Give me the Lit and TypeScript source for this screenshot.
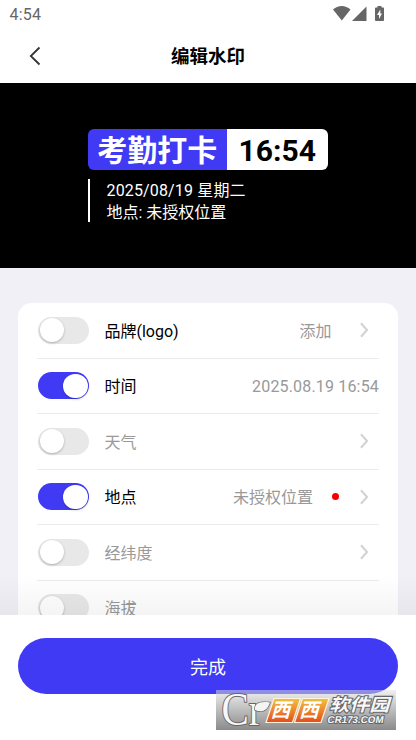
import { LitElement, html, css, nothing } from "lit";
import { customElement, property } from "lit/decorators.js";

interface Item {
  label: string;
  on?: boolean;
  dark?: boolean;
  value?: string;
  dot?: boolean;
  arrow?: boolean;
}

const ITEMS: Item[] = [
  { label: "品牌(logo)", dark: true, value: "添加", arrow: true },
  { label: "时间", on: true, dark: true, value: "2025.08.19 16:54" },
  { label: "天气", arrow: true },
  { label: "地点", on: true, dark: true, value: "未授权位置", dot: true, arrow: true },
  { label: "经纬度", arrow: true },
  { label: "海拔" },
];

@customElement("toggle-switch")
class ToggleSwitch extends LitElement {
  @property({ type: Boolean, reflect: true }) on = false;

  static styles = css`
    :host { display: flex; flex: none; box-sizing: border-box; width: 51px; height: 27.4px; padding: 0 1.5px; border-radius: 14px; background: #e8e8e8; align-items: center; }
    :host([on]) { background: #403af5; justify-content: flex-end; }
    .knob { width: 24.4px; height: 24.4px; border-radius: 50%; background: #fff; box-shadow: 0 1px 2.5px rgba(0, 0, 0, 0.25); }
  `;

  render() {
    return html`<div class="knob"></div>`;
  }
}

@customElement("setting-row")
class SettingRow extends LitElement {
  @property({ attribute: false }) item!: Item;

  static styles = css`
    :host { display: flex; align-items: center; box-sizing: border-box; height: 55.5px; border-bottom: 1px solid #ebebed; padding-left: 1px; font-size: 16px; color: #999; }
    .label { margin-left: 15.5px; flex: 1; line-height: 24px; padding-top: 2.5px; }
    .dark { color: #000; }
    .value { line-height: 24px; padding-top: 2.5px; }
    .time { letter-spacing: 0.17px; }
    .dot { width: 7px; height: 7px; border-radius: 50%; background: #f60000; margin-left: 18.5px; }
    .arrow { width: 9px; height: 16px; margin: 0 10px 0 28.5px; }
    .dot + .arrow { margin-left: 21.5px; }
  `;

  render() {
    const i = this.item;
    return html`
      <toggle-switch ?on=${i.on}></toggle-switch>
      <span class="label ${i.dark ? "dark" : ""}">${i.label}</span>
      ${i.value ? html`<span class="value ${i.arrow ? "" : "time"}">${i.value}</span>` : nothing}
      ${i.dot ? html`<span class="dot"></span>` : nothing}
      ${i.arrow
        ? html`<svg class="arrow" viewBox="0 0 9 16"><path d="M1 1.300 7 8 1 14.700" fill="none" stroke="#d3d3d3" stroke-width="2.1" /></svg>`
        : nothing}
    `;
  }
}

@customElement("site-badge")
class SiteBadge extends LitElement {
  static styles = css`
    :host { display: block; width: 180px; height: 40px; background: linear-gradient(rgba(224, 224, 224, 0.5), rgba(134, 134, 134, 0.96)); }
    svg { display: block; overflow: visible; }
    .serif { font-family: "Liberation Serif", serif; }
    .cjk { font-family: "Noto Sans CJK SC", sans-serif; font-weight: 700; }
    .sans { font-family: "Liberation Sans", sans-serif; font-weight: 700; }
    .out { paint-order: stroke; stroke: #66666a; stroke-width: 1.4px; fill: #f4f4f4; }
    .shade { fill: none; stroke: #66666a; stroke-width: 3px; }
    .bold { fill: #f4f4f4; stroke: #f4f4f4; stroke-width: 1.1px; }
    .tile { fill: url(#fire); stroke: #fff3dc; stroke-width: 1.2px; }
    .glyph { fill: #fff; }
    .mark { paint-order: stroke; stroke: #66666a; stroke-width: 2px; fill: #f8f8f8; }
  `;

  render() {
    return html`<svg width="180" height="40" viewBox="0 0 180 40">
      <defs>
        <linearGradient id="fire" x1="0" y1="0" x2="0" y2="1">
          <stop offset="0" stop-color="#efc23f" />
          <stop offset="0.55" stop-color="#ec812c" />
          <stop offset="1" stop-color="#e34b20" />
        </linearGradient>
      </defs>
      <text class="serif mark" x="5.500" y="34.500" font-size="46" textLength="41" lengthAdjust="spacingAndGlyphs">Cr</text>
      <path class="out" d="M39 20C38 14 43 11 54 12.5 51 21 46 23 39 20Z" />
      <path class="tile" d="M58 8.5H84.500L76.500 32.500H50Z" />
      <path class="tile" d="M86.500 8.500H113L105 32.500H78.500Z" />
      <g transform="skewX(-16)">
        <text class="cjk glyph" x="62.5" y="27.500" font-size="19.500">西</text>
        <text class="cjk glyph" x="91" y="27.500" font-size="19.500">西</text>
        <text class="cjk mark" x="119.500" y="21.500" font-size="17.500" textLength="60" lengthAdjust="spacingAndGlyphs">软件园</text>
      </g>
      <g transform="skewX(-10)">
        <text class="sans mark" x="117" y="33.500" font-size="9.800" textLength="56" lengthAdjust="spacingAndGlyphs">CR173.COM</text>
      </g>
    </svg>`;
  }
}

@customElement("app-root")
class AppRoot extends LitElement {
  static styles = css`
    :host { display: flex; flex-direction: column; position: relative; width: 416px; height: 740px; overflow: hidden; background: #fff; font-family: Roboto, "Noto Sans CJK SC", sans-serif; }
    .status { flex: none; height: 28px; box-sizing: border-box; padding: 5px 30px 0 9.5px; display: flex; justify-content: space-between; font-size: 16px; line-height: 20px; color: #666; letter-spacing: 0.2px; }
    .status svg { width: 53px; height: 18px; }
    .nav { flex: none; height: 55px; display: grid; grid-template-columns: 60px 1fr 60px; align-items: center; text-align: center; }
    .back { width: 12px; height: 20px; margin-left: 29px; }
    .title { font-size: 18.5px; font-weight: 700; line-height: 26px; color: #000; padding-top: 2px; }
    .preview { flex: none; height: 185px; box-sizing: border-box; background: #000; padding: 46px 88px 0; }
    .stamp { display: flex; height: 41px; border-radius: 6px; overflow: hidden; line-height: 41px; font-weight: 700; }
    .name { width: 138.500px; background: #403af5; color: #fff; font-size: 30px; text-align: center; padding-top: 1px; }
    .clock { flex: 1; background: #fff; color: #000; font-size: 30px; text-align: center; padding-top: 1px; }
    .info { box-sizing: border-box; margin-top: 9px; height: 43px; border-left: 2px solid #fff; padding: 1px 0 0 16.500px; color: #fff; font-size: 16px; line-height: 22px; white-space: nowrap; }
    .date { letter-spacing: 0.15px; }
    .scroll { flex: none; height: 347px; box-sizing: border-box; overflow: hidden; padding: 35px 18.500px 0 18px; background: #f1f0f6; position: relative; }
    .card { background: #fff; border-radius: 14px; padding: 0 18.500px 0 19px; }
    .fade { position: absolute; left: 0; right: 0; bottom: 0; height: 40px; background: linear-gradient(rgba(0, 0, 0, 0), rgba(0, 0, 0, 0.045)); }
    .footer { flex: 1; padding: 23px 18.500px 0 18.300px; }
    .done { display: flex; align-items: center; justify-content: center; height: 56px; border-radius: 28px; background: #403af5; color: #fff; font-size: 18px; }
    site-badge { position: absolute; left: 216px; top: 690px; }
  `;

  render() {
    return html`
      <div class="status">
        <span>4:54</span>
        <svg viewBox="0 0 53 18" fill="#666">
          <path d="M0 4.500C5-.3 12.500-.3 17.500 4.500L8.800 15.500Z" />
          <path d="M33.500 1.500V16H19Z" />
          <path d="M44.500 1H48.500V2.500H50.500Q51 2.500 51 3.500V15Q51 16 50 16H43Q42 16 42 15V3.500Q42 2.500 43 2.500H44.500Z" />
          <path d="M47.300 4.500 44 10H46V14L49 8.500H47.300Z" fill="#fff" />
        </svg>
      </div>
      <div class="nav">
        <svg class="back" viewBox="0 0 12 20"><path d="M10.500 1.500 1.800 10 10.500 18.500" fill="none" stroke="#333" stroke-width="1.800" /></svg>
        <span class="title">编辑水印</span>
      </div>
      <div class="preview">
        <div class="stamp"><div class="name">考勤打卡</div><div class="clock">16:54</div></div>
        <div class="info"><div class="date">2025/08/19 星期二</div><div>地点: 未授权位置</div></div>
      </div>
      <div class="scroll">
        <div class="card">${ITEMS.map((i) => html`<setting-row .item=${i}></setting-row>`)}</div>
        <div class="fade"></div>
      </div>
      <div class="footer"><div class="done">完成</div></div>
      <site-badge></site-badge>
    `;
  }
}
